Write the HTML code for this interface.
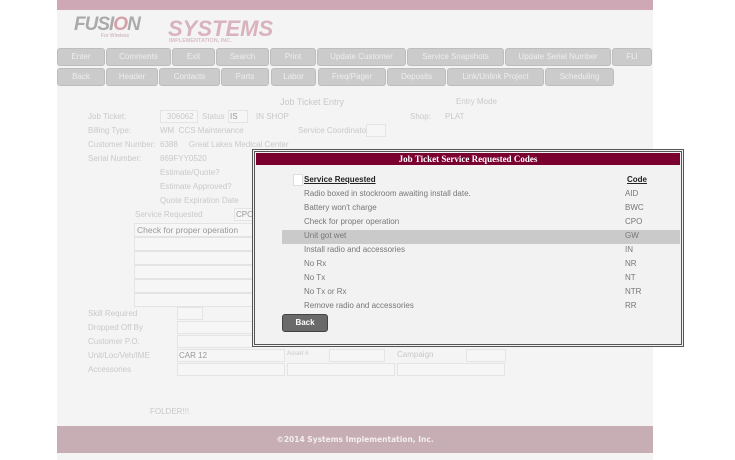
<!DOCTYPE html>
<html><head><style>
*{margin:0;padding:0;box-sizing:border-box}
body{width:735px;height:460px;background:#fff;font-family:"Liberation Sans",sans-serif;position:relative;overflow:hidden}
.a{position:absolute}
.page{left:57px;top:0;width:596px;height:460px;background:#f4f4f4}
.btn{position:absolute;height:18px;background:#cbcbcb;border:1px solid #bdbdbd;border-radius:3px;color:#eee;font-size:8px;text-align:center;line-height:16px}
.l{position:absolute;font-size:8px;color:#c9c9c9}
.in{position:absolute;background:#f6f6f6;border:1px solid #e4e4e4;height:13px}
.t{position:absolute;font-size:8px;color:#777}
</style></head><body>
<div class="a page"></div>
<div class="a" style="left:57px;top:0;width:596px;height:10px;background:#cfa8b6"></div>
<div class="a" style="left:74px;top:14px;font-size:19px;font-weight:bold;font-style:italic;color:#aaa;letter-spacing:-1px">FUSI<span style="color:#d5a0a8">O</span>N</div>
<div class="a" style="left:101px;top:33px;font-size:5px;color:#c9a8b0">For Wireless</div>
<div class="a" style="left:168px;top:16px;font-size:22px;font-weight:bold;font-style:italic;color:#d9b2bd">SYSTEMS</div>
<div class="a" style="left:169px;top:38px;font-size:5.5px;font-weight:bold;color:#d8c0c6">IMPLEMENTATION, INC.</div>

<div class="btn" style="left:57px;top:48px;width:48px">Enter</div>
<div class="btn" style="left:106px;top:48px;width:65px">Comments</div>
<div class="btn" style="left:172px;top:48px;width:43px">Exit</div>
<div class="btn" style="left:216px;top:48px;width:53px">Search</div>
<div class="btn" style="left:270px;top:48px;width:46px">Print</div>
<div class="btn" style="left:317px;top:48px;width:89px">Update Customer</div>
<div class="btn" style="left:407px;top:48px;width:97px">Service Snapshots</div>
<div class="btn" style="left:505px;top:48px;width:106px">Update Serial Number</div>
<div class="btn" style="left:612px;top:48px;width:40px">FLI</div>
<div class="btn" style="left:57px;top:68px;width:48px">Back</div>
<div class="btn" style="left:106px;top:68px;width:52px">Header</div>
<div class="btn" style="left:159px;top:68px;width:61px">Contacts</div>
<div class="btn" style="left:221px;top:68px;width:48px">Parts</div>
<div class="btn" style="left:271px;top:68px;width:45px">Labor</div>
<div class="btn" style="left:318px;top:68px;width:68px">Freq/Pager</div>
<div class="btn" style="left:387px;top:68px;width:59px">Deposits</div>
<div class="btn" style="left:447px;top:68px;width:97px">Link/Unlink Project</div>
<div class="btn" style="left:545px;top:68px;width:69px">Scheduling</div>

<div class="l" style="left:280px;top:97px;font-size:9px">Job Ticket Entry</div>
<div class="l" style="left:456px;top:97px">Entry Mode</div>
<div class="l" style="left:88px;top:112px">Job Ticket:</div>
<div class="in" style="left:160px;top:110px;width:38px"></div><div class="l" style="left:167px;top:112px">306062</div>
<div class="l" style="left:202px;top:112px">Status</div>
<div class="in" style="left:228px;top:110px;width:20px"></div><div class="l" style="left:230px;top:112px;color:#999">IS</div>
<div class="l" style="left:256px;top:112px">IN SHOP</div>
<div class="l" style="left:410px;top:112px">Shop:</div><div class="l" style="left:445px;top:112px">PLAT</div>
<div class="l" style="left:88px;top:126px">Billing Type:</div>
<div class="l" style="left:160px;top:126px">WM &nbsp;CCS Maintenance</div>
<div class="l" style="left:298px;top:126px">Service Coordinator</div>
<div class="in" style="left:366px;top:124px;width:20px"></div>
<div class="l" style="left:88px;top:140px">Customer Number:</div>
<div class="l" style="left:160px;top:140px">6388 &nbsp;&nbsp;&nbsp;&nbsp;Great Lakes Medical Center</div>
<div class="l" style="left:88px;top:154px">Serial Number:</div>
<div class="l" style="left:160px;top:154px">869FYY0520</div>
<div class="l" style="left:160px;top:168px">Estimate/Quote?</div>
<div class="l" style="left:160px;top:182px">Estimate Approved?</div>
<div class="l" style="left:160px;top:196px">Quote Expiration Date</div>
<div class="l" style="left:135px;top:210px">Service Requested</div>
<div class="in" style="left:234px;top:208px;width:20px"></div><div class="l" style="left:236px;top:210px;color:#999">CPO</div>
<div class="in" style="left:134px;top:223px;width:120px;height:14px"></div><div class="l" style="left:137px;top:225px;color:#999;font-size:8.5px">Check for proper operation</div>
<div class="in" style="left:134px;top:237px;width:120px;height:14px"></div>
<div class="in" style="left:134px;top:251px;width:120px;height:14px"></div>
<div class="in" style="left:134px;top:265px;width:120px;height:14px"></div>
<div class="in" style="left:134px;top:279px;width:120px;height:14px"></div>
<div class="in" style="left:134px;top:293px;width:120px;height:14px"></div>
<div class="l" style="left:88px;top:309px">Skill Required</div>
<div class="in" style="left:177px;top:307px;width:26px"></div>
<div class="l" style="left:88px;top:323px">Dropped Off By</div>
<div class="in" style="left:177px;top:321px;width:76px"></div>
<div class="l" style="left:88px;top:337px">Customer P.O.</div>
<div class="in" style="left:177px;top:335px;width:76px"></div>
<div class="l" style="left:88px;top:351px">Unit/Loc/Veh/IME</div>
<div class="in" style="left:177px;top:349px;width:108px"></div><div class="l" style="left:179px;top:351px;color:#999">CAR 12</div>
<div class="l" style="left:287px;top:350px;font-size:6.5px">Asset #</div>
<div class="in" style="left:329px;top:349px;width:56px"></div>
<div class="l" style="left:397px;top:350px">Campaign</div>
<div class="in" style="left:466px;top:349px;width:40px"></div>
<div class="l" style="left:88px;top:365px">Accessories</div>
<div class="in" style="left:177px;top:363px;width:108px"></div>
<div class="in" style="left:287px;top:363px;width:108px"></div>
<div class="in" style="left:397px;top:363px;width:108px"></div>
<div class="l" style="left:150px;top:407px">FOLDER!!!</div>

<div class="a" style="left:57px;top:426px;width:596px;height:27px;background:#c6aeb4;color:#f4eef0;font-size:7.5px;font-weight:bold;text-align:center;line-height:27px;font-family:'DejaVu Sans',sans-serif">©2014 Systems Implementation, Inc.</div>

<div class="a" style="left:252px;top:149px;width:432px;height:198px;border:3px double #555;background:#f2f2f2"></div>
<div class="a" style="left:256px;top:153px;width:424px;height:12px;background:#7a0030;color:#fff;font-family:'Liberation Serif',serif;font-weight:bold;font-size:9px;text-align:center;line-height:12px">Job Ticket Service Requested Codes</div>
<div class="a" style="left:293px;top:174px;width:10px;height:12px;background:#fff;border:1px solid #ddd"></div>
<div class="t" style="left:304px;top:175px;color:#222;font-weight:bold;text-decoration:underline">Service Requested</div>
<div class="t" style="left:627px;top:175px;color:#222;font-weight:bold;text-decoration:underline">Code</div>
<div class="a" style="left:282px;top:230px;width:398px;height:14px;background:#cacaca"></div>
<div class="t" style="left:304px;top:189px">Radio boxed in stockroom awaiting install date.</div><div class="t" style="left:625px;top:189px">AID</div>
<div class="t" style="left:304px;top:203px">Battery won't charge</div><div class="t" style="left:625px;top:203px">BWC</div>
<div class="t" style="left:304px;top:217px">Check for proper operation</div><div class="t" style="left:625px;top:217px">CPO</div>
<div class="t" style="left:304px;top:231px">Unit got wet</div><div class="t" style="left:625px;top:231px">GW</div>
<div class="t" style="left:304px;top:245px">Install radio and accessories</div><div class="t" style="left:625px;top:245px">IN</div>
<div class="t" style="left:304px;top:259px">No Rx</div><div class="t" style="left:625px;top:259px">NR</div>
<div class="t" style="left:304px;top:273px">No Tx</div><div class="t" style="left:625px;top:273px">NT</div>
<div class="t" style="left:304px;top:287px">No Tx or Rx</div><div class="t" style="left:625px;top:287px">NTR</div>
<div class="t" style="left:304px;top:301px">Remove radio and accessories</div><div class="t" style="left:625px;top:301px">RR</div>
<div class="a" style="left:282px;top:314px;width:46px;height:18px;background:#6a6a6a;border:1px solid #444;border-radius:3px;color:#fff;font-size:8px;font-weight:bold;text-align:center;line-height:16px">Back</div>
</body></html>
